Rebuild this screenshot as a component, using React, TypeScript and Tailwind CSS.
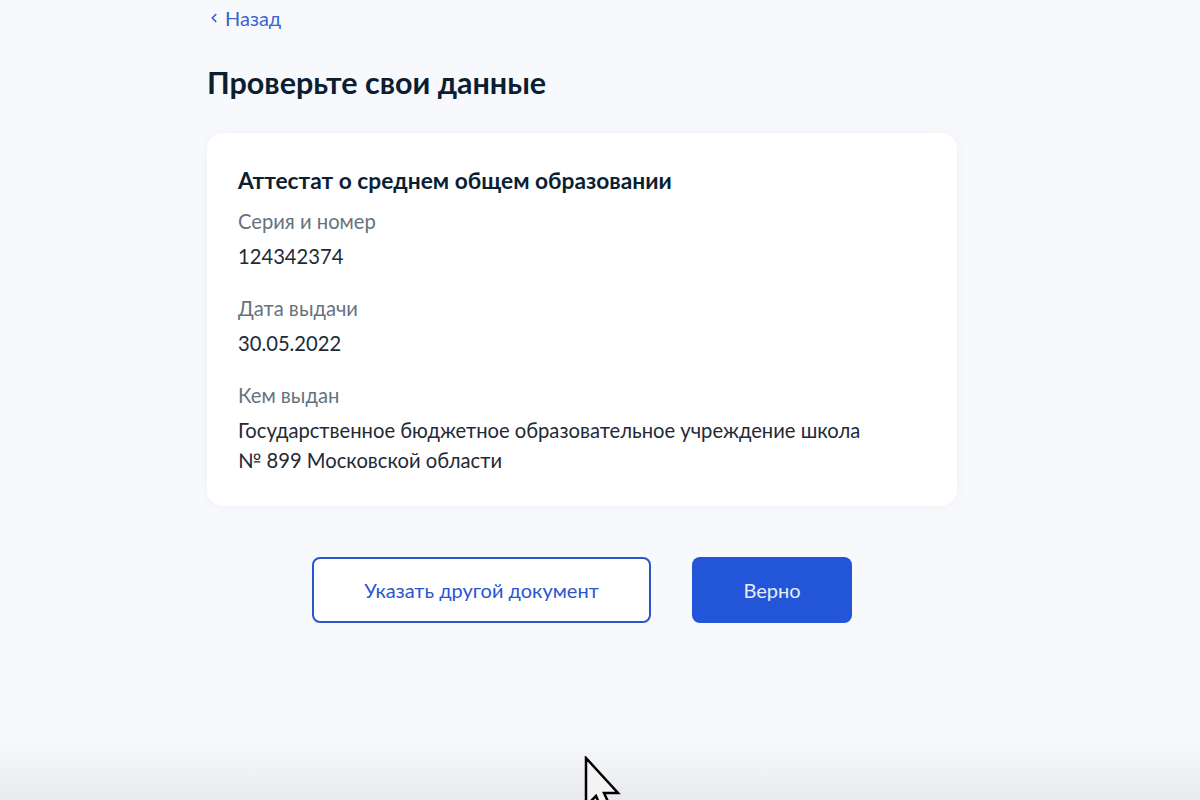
import { ChevronLeft } from "lucide-react";

const fields = [
  { label: "Серия и номер", value: "124342374" },
  { label: "Дата выдачи", value: "30.05.2022" },
  {
    label: "Кем выдан",
    value: "Государственное бюджетное образовательное учреждение школа\n№ 899 Московской области",
  },
];

export default function App() {
  return (
    <div
      className="relative h-[800px] w-[1200px] overflow-hidden bg-[#f8f9fc] text-[#0b1f33]"
      style={{ fontFamily: "Lato, 'Noto Sans', sans-serif" }}
    >
      <div className="ml-[207px] w-[750px] pt-[5px]">
        {/* Back link */}
        <a className="flex items-center gap-[4px] text-[20px] leading-[26px] text-[#3b63cf]">
          <ChevronLeft className="h-[14px] w-[14px]" strokeWidth={3} />
          <span>Назад</span>
        </a>

        <h1 className="mt-[33px] text-[30.5px] font-bold leading-[36px] text-[#0b1f33]">
          Проверьте свои данные
        </h1>

        {/* Card */}
        <div className="mt-[33px] rounded-[16px] bg-white px-[31px] pt-[33px] pb-[31px] shadow-[0_0_12px_rgba(100,110,160,0.06)]">
          <h2 className="text-[22.75px] font-bold leading-[30px]">
            Аттестат о среднем общем образовании
          </h2>
          {fields.map((f, i) => (
            <div key={f.label} className={i === 0 ? "mt-[10px]" : "mt-[22px]"}>
              <div className="text-[20.2px] leading-[30px] text-[#66727f]">{f.label}</div>
              <div className="mt-[5px] whitespace-pre-line text-[20.2px] leading-[30px] text-[#1f2a36]">
                {f.value}
              </div>
            </div>
          ))}
        </div>

        {/* Actions */}
        <div className="mt-[51px] flex justify-center gap-[41px]">
          <button className="h-[66px] w-[339px] rounded-[8px] border-2 border-[#2a55cf] bg-white text-[20px] text-[#2a55cf]">
            Указать другой документ
          </button>
          <button className="h-[66px] w-[160px] rounded-[8px] bg-[#2355d8] text-[20px] text-[#e6edfb]">
            Верно
          </button>
        </div>
      </div>

      {/* Bottom shade */}
      <div className="absolute bottom-0 left-0 right-0 h-[60px] bg-gradient-to-b from-[#f8f9fc] to-[#e9eaee]" />

      {/* Cursor */}
      <svg
        className="absolute left-[584px] top-[756px]"
        width="42"
        height="60"
        viewBox="0 0 42 60"
      >
        <path
          d="M2 2 L2 50 L12 40 L19 56 L27 52 L20 37 L34 37 Z"
          fill="#f4f4f4"
          stroke="#000"
          strokeWidth="2.5"
          strokeLinejoin="miter"
        />
      </svg>
    </div>
  );
}
